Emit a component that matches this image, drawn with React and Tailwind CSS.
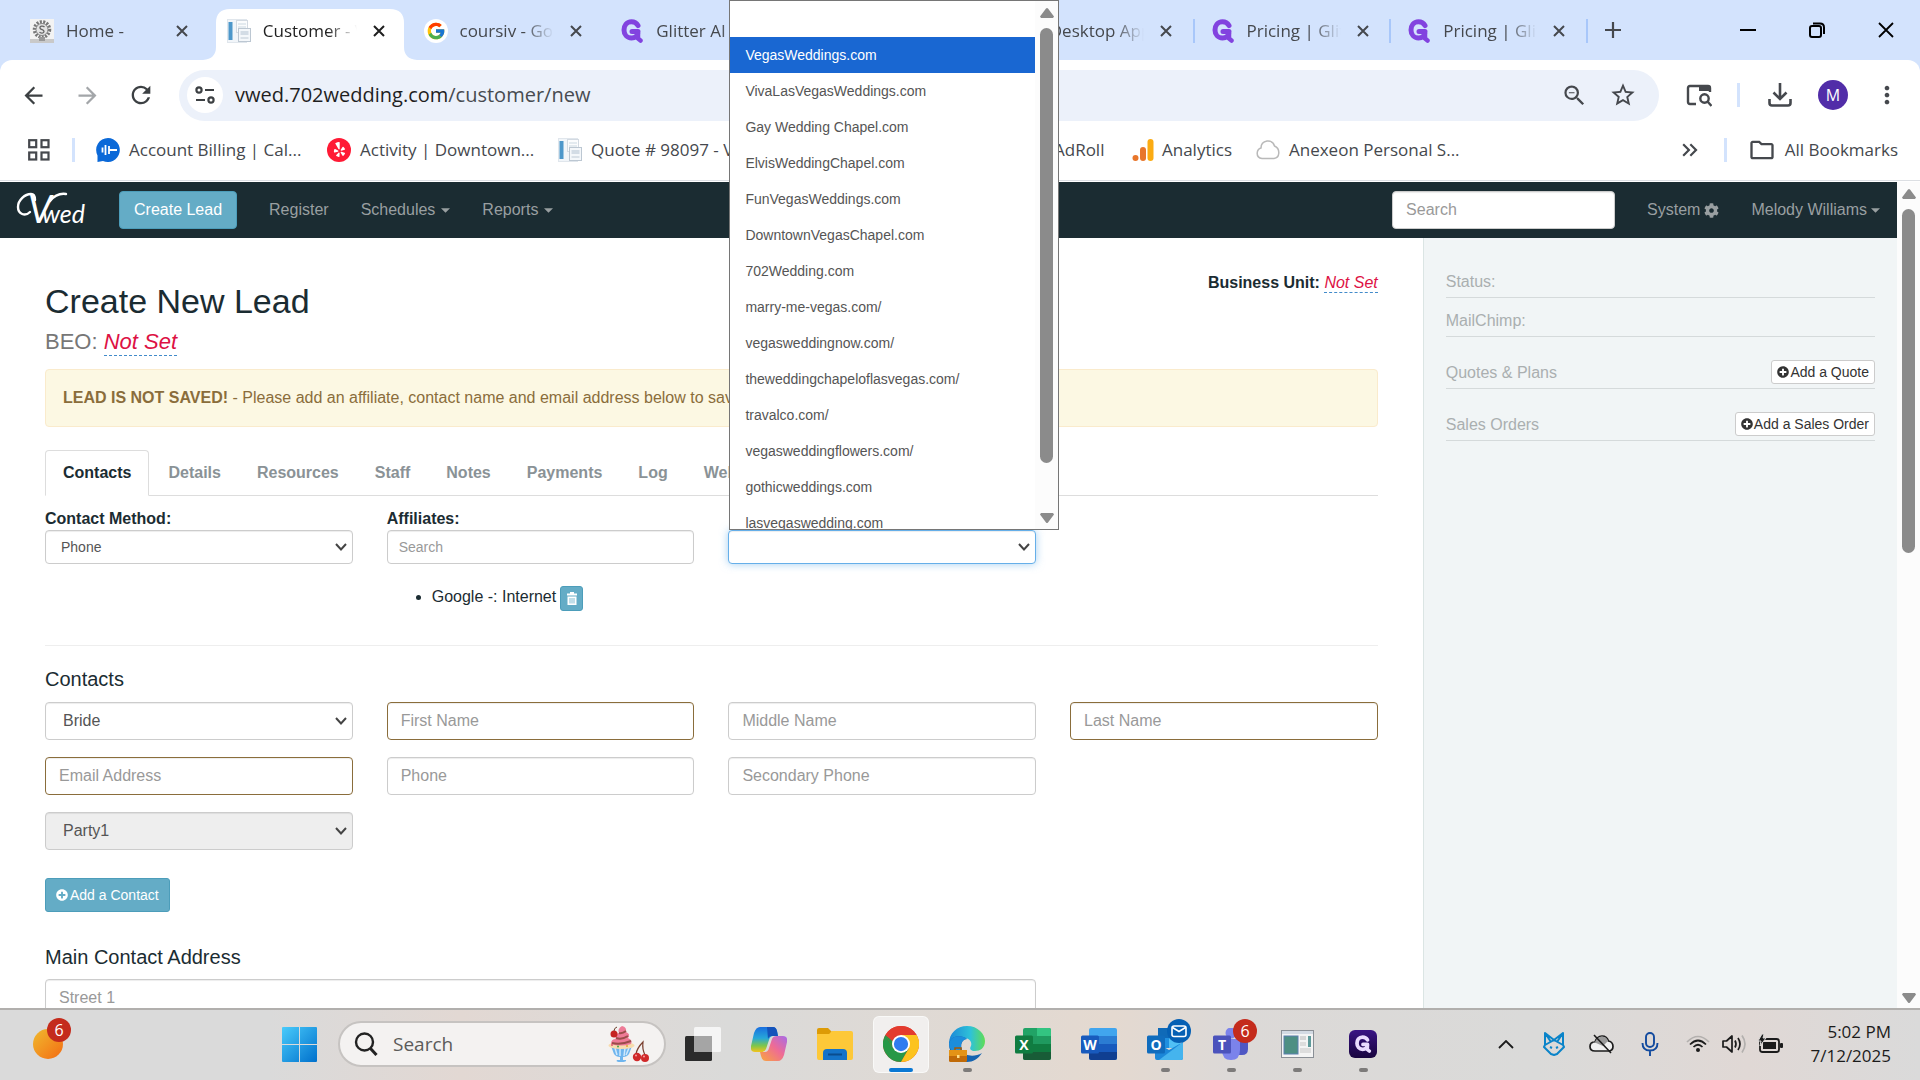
import React from "react";
import { FcGoogle } from "react-icons/fc";
import { FaCog, FaPlusCircle, FaYelp } from "react-icons/fa";
import { MdArrowBack, MdArrowForward, MdRefresh, MdZoomOut, MdStarOutline, MdMoreVert, MdKeyboardDoubleArrowRight, MdOutlineFolder } from "react-icons/md";

/* ---------- small drawings ---------- */

function GlitterMark({ className = "" }) {
  return (
    <svg viewBox="0 0 24 24" fill="none" stroke="currentColor" strokeWidth="5" className={className} aria-hidden="true">
      <path d="M18 6.500C16.500 4 14 2.800 11.500 2.800C6.500 2.800 4 7 4 11C4 15.500 7 19 11.500 19C15 19 18 16.800 18 12.500H12" strokeLinecap="round" strokeLinejoin="round" />
      <path d="M18 14V19.500L20.500 21.500" strokeWidth="4.500" strokeLinecap="round" />
    </svg>
  );
}

function DocIcon() {
  return (
    <svg viewBox="0 0 24 24" className="size-6 shrink-0" aria-hidden="true">
      <rect x="0.500" y="0.500" width="19" height="23" fill="#f1f5f9" stroke="#e0e6ec" />
      <rect x="1.500" y="3" width="4" height="18" fill="#4d97ca" />
      <rect x="9.500" y="1.500" width="11" height="12" fill="#fbfcfd" stroke="#d3dae2" />
      <path d="M11 5H19M11 8H19" stroke="#dce3ea" strokeWidth="1.500" />
      <rect x="11.500" y="9.500" width="12" height="13" fill="#f4f7fa" stroke="#bcc7d2" />
      <rect x="13.500" y="12" width="8" height="4" fill="#d3dce5" />
      <path d="M13.500 19H21.500" stroke="#d0d8e0" strokeWidth="1.500" />
    </svg>
  );
}

function SealIcon() {
  return (
    <svg viewBox="0 0 24 24" className="size-6 shrink-0" aria-hidden="true">
      <rect width="24" height="24" fill="#f3f3f3" />
      <rect y="20" width="24" height="4" fill="#c9c9c9" />
      <circle cx="12" cy="10.500" r="7.500" fill="none" stroke="#777" strokeWidth="3.500" strokeDasharray="2 1.300" />
      <circle cx="12" cy="10.500" r="6" fill="#e4e4e4" stroke="#888" />
      <path d="M14.500 8C13 6.500 9.500 7 10 9C10.500 11 14 10.500 14 12.500C14 14.500 10.500 14.500 9.500 13" fill="none" stroke="#666" strokeWidth="1.300" />
      <path d="M9 18H15V22H9Z" fill="#999" />
    </svg>
  );
}

function CloseX() {
  return (
    <svg viewBox="0 0 12 12" className="size-3" fill="none" stroke="currentColor" strokeWidth="2" aria-hidden="true">
      <path d="M1 1L11 11M11 1L1 11" />
    </svg>
  );
}

function Arrow({ down }) {
  return (
    <svg viewBox="0 0 14 12" className="h-3 w-3.5 shrink-0 fill-[#8b8b8b]" aria-hidden="true">
      {down ? <path d="M1 1H13L14 2.500L8 10.500Q7 11.500 6 10.500L0 2.500Z" /> : <path d="M1 11H13L14 9.500L8 1.500Q7 0.500 6 1.500L0 9.500Z" />}
    </svg>
  );
}

function Caret() {
  return (
    <svg viewBox="0 0 10 5" className="h-[5px] w-[9px] fill-current" aria-hidden="true"><path d="M0 0H10L5 5Z" /></svg>
  );
}

function TrashIcon() {
  return (
    <svg viewBox="0 0 12 13" className="h-[13px] w-3" aria-hidden="true">
      <path d="M4 1.500V0H8V1.500H11V3.500H1V1.500ZM1.500 4.500H10.500V13H1.500Z" fill="#fff" />
      <path d="M4 6V11.500M6 6V11.500M8 6V11.500" stroke="#64acc6" strokeWidth="0.800" />
    </svg>
  );
}

/* ---------- browser frame ---------- */

const TABS = [
  { title: "Home -", icon: "seal" },
  { title: "Customer - Vwed", icon: "doc", active: true },
  { title: "coursiv - Google", icon: "google" },
  { title: "Glitter AI", icon: "glitter" },
  { title: "Glitter AI", icon: "glitter" },
  { title: "Desktop App", icon: "glitter" },
  { title: "Pricing | Glitter", icon: "glitter" },
  { title: "Pricing | Glitter", icon: "glitter" },
];

function TabIcon({ kind }) {
  if (kind === "seal") return <SealIcon />;
  if (kind === "doc") return <DocIcon />;
  if (kind === "google")
    return <span className="flex size-6 shrink-0 items-center justify-center rounded-full bg-white"><FcGoogle className="size-5" /></span>;
  return <GlitterMark className="size-6 shrink-0 text-[#8243df]" />;
}

function Tab({ title, icon, active, separator }) {
  return (
    <div className={`relative flex h-full min-w-0 flex-1 items-center pt-px pl-4 ${active ? "z-10" : ""}`}>
      {active && (
        <svg viewBox="0 0 214 51" preserveAspectRatio="none" className="absolute -left-2 bottom-0 h-[51px] w-[214px] fill-white" aria-hidden="true">
          <path d="M0 51Q13 50 13 38V14Q13 0 27 0H187Q201 0 201 14V38Q201 50 214 51Z" />
        </svg>
      )}
      <div className="relative flex min-w-0 flex-1 items-center">
        <TabIcon kind={icon} />
        <span className={`ml-3 w-[94px] overflow-hidden whitespace-nowrap text-[17px] leading-6 [mask-image:linear-gradient(to_right,black_68%,transparent)] ${active ? "text-[#1f1f1f]" : "text-[#45484d]"}`}>{title}</span>
        <button aria-label="Close tab" className={`ml-3 p-1 ${active ? "text-[#1f1f1f]" : "text-[#45484d]"}`}><CloseX /></button>
      </div>
      {separator && <span className="h-6 w-0.5 bg-[#a8c7fa]" />}
    </div>
  );
}

function BrowserChrome() {
  return (
    <header className="shrink-0 bg-[#d3e3fd] font-['Open_Sans','Noto_Sans',sans-serif] text-[#45484d]">
      <div className="flex h-[60px] items-stretch">
        <div className="ml-3.5 flex w-[1574px] min-w-0">
          {TABS.map((t, i) => <Tab key={i} {...t} separator={i > 2} />)}
        </div>
        <button aria-label="New tab" className="ml-4 self-center">
          <svg viewBox="0 0 18 18" className="size-[18px]" stroke="currentColor" strokeWidth="2.200" aria-hidden="true"><path d="M9 1V17M1 9H17" /></svg>
        </button>
        <div className="ml-auto flex items-center gap-[53px] pr-[26px] text-black">
          <button aria-label="Minimize"><svg viewBox="0 0 16 16" className="size-4" stroke="currentColor" strokeWidth="2" aria-hidden="true"><path d="M0 8H16" /></svg></button>
          <button aria-label="Restore">
            <svg viewBox="0 0 16 16" className="size-4" fill="none" stroke="currentColor" strokeWidth="2" aria-hidden="true">
              <rect x="1" y="4" width="11" height="11" rx="2" /><path d="M4 1.500H11Q15 1.500 15 5.500V12" />
            </svg>
          </button>
          <button aria-label="Close"><svg viewBox="0 0 16 16" className="size-4" stroke="currentColor" strokeWidth="1.800" aria-hidden="true"><path d="M1 1L15 15M15 1L1 15" /></svg></button>
        </div>
      </div>

      <div className="rounded-t-xl border-b border-[#dcdfe3] bg-white">
        <div className="flex h-[70px] items-center pr-[19px] pl-5">
          <button aria-label="Back" className="text-[#3c4043]"><MdArrowBack className="size-[27px]" /></button>
          <button aria-label="Forward" className="ml-[27px] text-[#a3a6a9]"><MdArrowForward className="size-[27px]" /></button>
          <button aria-label="Reload" className="ml-[26px] text-[#3c4043]"><MdRefresh className="size-7" /></button>
          <div className="ml-6 flex h-[51px] flex-1 items-center rounded-full bg-[#ecf1fa] pr-[22px] pl-2">
            <button aria-label="Site information" className="flex size-9 items-center justify-center rounded-full bg-white text-[#3c4043]">
              <svg viewBox="0 0 20 18" className="h-[18px] w-5" fill="none" stroke="currentColor" strokeWidth="2.200" aria-hidden="true">
                <circle cx="4" cy="4" r="2.600" /><path d="M10 4H19M1 14H10" /><circle cx="16" cy="14" r="2.600" />
              </svg>
            </button>
            <div role="textbox" aria-label="Address" className="ml-3 flex-1 text-[20px] leading-7 text-[#1f1f1f]">vwed.702wedding.com<span className="text-[#474b50]">/customer/new</span></div>
            <button aria-label="Zoom"><MdZoomOut className="size-[27px]" /></button>
            <button aria-label="Bookmark" className="ml-[21px]"><MdStarOutline className="size-7" /></button>
          </div>
          <button aria-label="Search side panel" className="ml-[27px]">
            <svg viewBox="0 0 26 24" className="h-6 w-[26px]" fill="none" stroke="currentColor" strokeWidth="2.400" aria-hidden="true">
              <path d="M10 21H4Q2 21 2 19V5Q2 3 4 3H22Q24 3 24 5V9" /><path d="M13 3H24V8H13Z" fill="currentColor" stroke="none" />
              <circle cx="18.500" cy="15.500" r="4.200" /><path d="M21.500 18.500L25.500 23" />
            </svg>
          </button>
          <span className="ml-[25px] h-6 w-[3px] bg-[#d3e3fd]" />
          <button aria-label="Downloads" className="ml-7">
            <svg viewBox="0 0 24 24" className="size-6" fill="none" stroke="currentColor" strokeWidth="2.600" aria-hidden="true">
              <path d="M12 0V15M5.500 9.500L12 16L18.500 9.500M1.500 16V20Q1.500 22.500 4 22.500H20Q22.500 22.500 22.500 20V16" />
            </svg>
          </button>
          <button aria-label="Profile" className="ml-[26px] flex size-[30px] items-center justify-center rounded-full bg-[#512da8] text-base text-white">M</button>
          <button aria-label="Menu" className="ml-[25px]"><MdMoreVert className="size-[28px]" /></button>
        </div>

        <nav aria-label="Bookmarks" className="flex h-[50px] items-center pb-[11px] pl-7 pr-[22px] text-[17px] leading-6 whitespace-nowrap">
          <svg viewBox="0 0 22 22" className="size-[22px] shrink-0" fill="none" stroke="currentColor" strokeWidth="2.200" aria-hidden="true">
            <rect x="1.200" y="1.200" width="7" height="7" /><rect x="13.500" y="1.200" width="7" height="7" /><rect x="1.200" y="13.500" width="7" height="7" /><rect x="13.500" y="13.500" width="7" height="7" />
          </svg>
          <span className="ml-[22px] h-6 w-[3px] bg-[#d3e3fd]" />
          <a href="#billing" className="ml-[21px] flex items-center">
            <svg viewBox="0 0 24 24" className="size-6" aria-hidden="true">
              <path d="M12 0A12 12 0 1 1 7 23L1.500 24L1.500 17.500A12 12 0 0 1 12 0Z" fill="#0b69d8" />
              <path d="M6.500 9.500V14.500M9.500 7V17M13 8V16M13 12H21" stroke="#fff" strokeWidth="1.800" />
            </svg>
            <span className="ml-[9px] w-[176px]">Account Billing | Cal...</span>
          </a>
          <a href="#activity" className="ml-[22px] flex items-center">
            <span className="flex size-6 items-center justify-center rounded-full bg-[#ff1a35] text-white"><FaYelp className="size-[15px]" /></span>
            <span className="ml-[9px] w-[176px]">Activity | Downtown...</span>
          </a>
          <a href="#quote" className="ml-[22px] flex items-center"><DocIcon /><span className="ml-[9px] w-[176px]">Quote # 98097 - Vwed</span></a>
          <a href="#adroll" className="ml-[287px] w-[54px]">AdRoll</a>
          <a href="#analytics" className="ml-6 flex items-center">
            <svg viewBox="0 0 22 22" className="size-[22px]" aria-hidden="true">
              <rect x="15.500" width="6" height="22" rx="3" fill="#fbab12" /><rect x="8" y="8" width="6" height="14" rx="3" fill="#e8762b" /><circle cx="3.500" cy="19" r="3" fill="#e8762b" />
            </svg>
            <span className="ml-2 w-[74px]">Analytics</span>
          </a>
          <a href="#anexeon" className="ml-5 flex items-center">
            <svg viewBox="0 0 24 22" className="h-[22px] w-6" fill="#fff" stroke="#b9b9b9" strokeWidth="1.500" aria-hidden="true">
              <path d="M6 19.500Q1 19 1.200 14Q1.500 10 5 9Q5 3 11 2Q17 1.500 18.500 7Q23 9 22.800 14Q22.500 19 18 19.500Z" />
            </svg>
            <span className="ml-[9px]">Anexeon Personal S...</span>
          </a>
          <div className="ml-auto flex items-center">
            <button aria-label="More bookmarks"><MdKeyboardDoubleArrowRight className="size-[26px]" /></button>
            <span className="ml-[21px] h-6 w-[3px] bg-[#d3e3fd]" />
            <a href="#all" className="ml-[21px] flex items-center gap-[9px]"><MdOutlineFolder className="size-7" />All Bookmarks</a>
          </div>
        </nav>
      </div>
    </header>
  );
}

/* ---------- application ---------- */

function Navbar() {
  return (
    <nav className="flex h-14 items-center bg-[#1b2c32] pl-4 pr-[17px] text-[#999fa1]">
      <a href="#home" aria-label="Vwed" className="relative flex h-full w-[103px] items-center text-white">
        <svg viewBox="0 0 56 34" className="absolute top-[9px] left-0 h-[34px] w-14" fill="none" stroke="#fff" strokeWidth="2.400" strokeLinecap="round" aria-hidden="true">
          <path d="M14 21C9 26 2 23 2 16C2 9 9 3 15 3C18 3 19 5 19 9" />
          <path d="M34 10C38 5 43 2 50 3" />
        </svg>
        <span className="flex items-baseline pl-3 font-['Lato',sans-serif] text-[38px] leading-[38px] italic">
          V<span className="-ml-2.5 text-[25px]">wed</span>
        </span>
      </a>
      <button className="h-[38px] rounded-[4px] border border-[#4c9dba] bg-[#64acc6] px-3.5 text-white">Create Lead</button>
      <a href="#register" className="ml-8">Register</a>
      <button className="ml-8 flex items-center gap-1.5">Schedules <Caret /></button>
      <button className="ml-8 flex items-center gap-1.5">Reports <Caret /></button>
      <input aria-label="Search" placeholder="Search" className="ml-auto h-[38px] w-[223px] rounded-[4px] border border-[#ccc] bg-white px-[13px] shadow-[inset_0_1px_1px_rgba(0,0,0,0.08)] placeholder:text-[#999]" />
      <a href="#system" className="ml-8 flex items-center gap-1">System <FaCog className="size-[15px]" /></a>
      <button className="ml-8 flex items-center gap-1">Melody Williams <Caret /></button>
    </nav>
  );
}

function Select({ id, label, value, small, disabled, focused }) {
  return (
    <div className="relative">
      <select
        id={id}
        aria-label={label}
        defaultValue={value}
        disabled={disabled}
        className={`block w-full appearance-none rounded-[4px] border text-[#555] opacity-100 ${small ? "h-[34px] pl-[15px] text-sm" : "h-[38px] pl-[17px] text-base"} ${disabled ? "bg-[#eee]" : "bg-white"} ${focused ? "border-[#66afe9] shadow-[inset_0_1px_1px_rgba(0,0,0,0.075),0_0_9px_rgba(102,175,233,0.6)]" : "border-[#ccc] shadow-[inset_0_1px_1px_rgba(0,0,0,0.075)]"}`}
      >
        <option value={value}>{value}</option>
      </select>
      <svg viewBox="0 0 12 8" className="pointer-events-none absolute inset-y-0 right-1.5 my-auto h-2 w-3" fill="none" stroke="#444" strokeWidth="2" aria-hidden="true">
        <path d="M1 1L6 6.500L11 1" />
      </svg>
    </div>
  );
}

function Field({ label, small, required, className = "" }) {
  return (
    <input
      aria-label={label}
      placeholder={label}
      className={`block w-full rounded-[4px] border bg-white shadow-[inset_0_1px_1px_rgba(0,0,0,0.075)] placeholder:text-[#999] ${small ? "h-[34px] px-[11px] text-sm" : "h-[38px] px-[13px] text-base"} ${required ? "border-[#8a6d3b]" : "border-[#ccc]"} ${className}`}
    />
  );
}

const SITES = [
  "", "VegasWeddings.com", "VivaLasVegasWeddings.com", "Gay Wedding Chapel.com", "ElvisWeddingChapel.com",
  "FunVegasWeddings.com", "DowntownVegasChapel.com", "702Wedding.com", "marry-me-vegas.com/", "vegasweddingnow.com/",
  "theweddingchapeloflasvegas.com/", "travalco.com/", "vegasweddingflowers.com/", "gothicweddings.com", "lasvegaswedding.com",
];

function SiteList() {
  return (
    <div className="absolute bottom-full left-px z-30 flex h-[530px] w-[330px] overflow-hidden border border-[#767676] bg-white text-sm text-[#555]">
      <ul role="listbox" aria-label="Website" className="flex-1">
        {SITES.map((s) => (
          <li key={s} role="option" aria-selected={s === "VegasWeddings.com"} className={`h-9 pl-[15px] leading-9 ${s === "VegasWeddings.com" ? "bg-[#1967d2] text-white" : ""}`}>{s}</li>
        ))}
      </ul>
      <div className="flex w-[23px] flex-col items-center bg-[#fcfcfc] pt-1.5 pb-[5px]">
        <Arrow />
        <div className="mt-[9px] h-[435px] w-[13px] rounded-full bg-[#8b8b8b]" />
        <div className="mt-auto"><Arrow down /></div>
      </div>
    </div>
  );
}

const SECTIONS = ["Contacts", "Details", "Resources", "Staff", "Notes", "Payments", "Log", "Web"];

function NotSet() {
  return <a href="#set" className="border-b border-dashed border-[#428bca] pb-px text-[#dd1144] italic">Not Set</a>;
}

function LeadForm() {
  return (
    <main className="w-3/4 px-[45px] pt-[34px]">
      <div className="flex items-start justify-between">
        <div className="pt-2.5">
          <h1 className="text-[34px] leading-[38px]">Create New Lead</h1>
          <p className="mt-2.5 text-[22px] leading-6 text-[#777]">BEO: <NotSet /></p>
        </div>
        <p className="leading-[22px]"><b>Business Unit:</b> <NotSet /></p>
      </div>

      <div role="alert" className="mt-[15px] flex h-[58px] items-center rounded-[4px] border border-[#faebcc] bg-[#fcf8e3] px-[17px] whitespace-pre-wrap text-[#8a6d3b]">
        <b>LEAD IS NOT SAVED!</b> - Please add an affiliate, contact name and email address below to save.
      </div>

      <div role="tablist" className="mt-[23px] flex gap-0.5 border-b border-[#ddd]">
        {SECTIONS.map((s, i) => (
          <button key={s} role="tab" aria-selected={i === 0} className={`-mb-px h-[46px] rounded-t-[4px] border font-bold ${i === 0 ? "border-[#ddd] border-b-white bg-white px-[17px]" : "border-transparent px-4 text-[#8a9296]"}`}>{s}</button>
        ))}
      </div>

      <div className="mt-3 grid grid-cols-4 gap-x-[34px]">
        <div>
          <label htmlFor="method" className="block leading-[22px] font-bold">Contact Method:</label>
          <Select id="method" value="Phone" small />
        </div>
        <div>
          <span className="block leading-[22px] font-bold">Affiliates:</span>
          <Field label="Search" small />
          <ul className="mt-[22px] list-disc pl-[45px] leading-[22px]">
            <li>
              <div className="flex h-[25px] items-start gap-1">
                <span>Google -: Internet</span>
                <button aria-label="Remove affiliate" className="flex h-[25px] w-[23px] items-center justify-center rounded-[3px] border border-[#4c9dba] bg-[#64acc6]"><TrashIcon /></button>
              </div>
            </li>
          </ul>
        </div>
        <div className="pt-[22px]">
          <div className="relative">
            <Select label="Website" value="" small focused />
            <SiteList />
          </div>
        </div>
      </div>

      <hr className="mt-[34px] border-[#eee]" />

      <h2 className="mt-[22px] text-xl leading-[22px]">Contacts</h2>
      <div className="mt-3 grid grid-cols-4 gap-x-[34px] gap-y-[17px]">
        <Select label="Role" value="Bride" />
        <Field label="First Name" required />
        <Field label="Middle Name" />
        <Field label="Last Name" required />
        <Field label="Email Address" required />
        <Field label="Phone" />
        <Field label="Secondary Phone" />
        <div className="col-start-1"><Select label="Party" value="Party1" disabled /></div>
      </div>
      <button className="mt-7 flex h-[34px] items-center gap-0.5 rounded-[3px] border border-[#4c9dba] bg-[#64acc6] px-2.5 pb-px text-sm text-white">
        <FaPlusCircle className="size-3" />Add a Contact
      </button>

      <h2 className="mt-[34px] text-xl leading-[22px]">Main Contact Address</h2>
      <div className="mt-[11px] grid grid-cols-4 gap-x-[34px]"><Field label="Street 1" className="col-span-3" /></div>
    </main>
  );
}

function AddButton({ children }) {
  return (
    <button className="flex h-6 items-center gap-px rounded-[3px] border border-[#ccc] bg-white px-[5px] pb-px text-sm text-[#333]"><FaPlusCircle className="size-3" />{children}</button>
  );
}

function Sidebar() {
  const row = "flex border-b border-[#d5dadb]";
  return (
    <aside className="w-1/4 border-l border-[#dbe5e4] bg-[#f1f5f6] px-[22px] pt-[21px] text-[#aaafb0]">
      <div className={`${row} h-[39px] items-end pb-[3px]`}>Status:</div>
      <div className={`${row} h-[39px] items-end pb-[3px]`}>MailChimp:</div>
      <div className={`${row} mt-[23px] h-[29px] items-start justify-between`}><span className="leading-[26px]">Quotes &amp; Plans</span><AddButton>Add a Quote</AddButton></div>
      <div className={`${row} mt-[23px] h-[29px] items-start justify-between`}><span className="leading-[26px]">Sales Orders</span><AddButton>Add a Sales Order</AddButton></div>
    </aside>
  );
}

/* ---------- taskbar ---------- */

function OfficeIcon({ letter, tones, tile }) {
  return (
    <svg viewBox="0 0 36 32" className="h-8 w-9" aria-hidden="true">
      <rect x="8" width="28" height="32" rx="2" fill={tones[0]} />
      <path d="M8 8H36V16H8Z" fill={tones[1]} /><path d="M8 16H36V24H8Z" fill={tones[2]} /><path d="M8 24H36V30Q36 32 34 32H10Q8 32 8 30Z" fill={tones[3]} />
      {letter === "X" && <path d="M22 0H34Q36 0 36 2V8H22Z" fill="#33c481" />}
      <rect y="7.500" width="18" height="18" rx="1.500" fill={tile} />
      <text x="9" y="21.500" textAnchor="middle" fontFamily="Open Sans, sans-serif" fontWeight="700" fontSize="14" fill="#fff">{letter}</text>
    </svg>
  );
}

function ChromeIcon() {
  return (
    <svg viewBox="0 0 48 48" className="size-9" aria-hidden="true">
      <circle cx="24" cy="24" r="24" fill="#e33b2e" />
      <path d="M24 24L3.200 12A24 24 0 0 0 24 48L34.400 30Z" fill="#279847" />
      <path d="M24 24L34.400 30L24 48A24 24 0 0 0 44.800 12H24Z" fill="#fcc31e" />
      <path d="M3.200 12A24 24 0 0 1 44.800 12H24A12 12 0 0 0 13.600 18L13.600 30Z" fill="#e33b2e" />
      <path d="M3.200 12L13.600 30A12 12 0 0 0 24 36V30Z" fill="#279847" />
      <circle cx="24" cy="24" r="12" fill="#fff" /><circle cx="24" cy="24" r="9.500" fill="#2f7cf0" />
    </svg>
  );
}

function EdgeIcon() {
  return (
    <svg viewBox="0 0 36 36" className="size-9" aria-hidden="true">
      <defs><linearGradient id="edge" x1="0" x2="1"><stop offset="0" stopColor="#1b87d8" /><stop offset=".6" stopColor="#2fc2d8" /><stop offset="1" stopColor="#5fdd55" /></linearGradient></defs>
      <path d="M0 18C0 7 8 0 18 0C29 0 36 8 36 15C36 22 31 25 26 25C22 25 20.500 23 21.500 21C24 17 21 12 15 12C7 12 0 18 0 18Z" fill="url(#edge)" />
      <path d="M0 18C1 10 12 8 18 13C13 13 11 19 13 24C16 31 26 31 33 27C29 33 24 36 18 36C8 36 0 28 0 18Z" fill="#1463b0" />
      <path d="M0 18C1 10 12 8 18 13C12 14 11 19 13 24H2Q0 21 0 18Z" fill="#1c8ddc" />
      <path d="M6 24V22H12V24" fill="none" stroke="#a45a08" strokeWidth="1.500" />
      <rect y="24" width="18" height="12" rx="1.500" fill="#c06a08" /><rect y="24" width="18" height="6" fill="#e39316" /><rect x="8" y="29" width="2.500" height="3" fill="#ffe08a" />
    </svg>
  );
}

function TaskItem({ label, children, active, running }) {
  return (
    <button aria-label={label} className="relative flex h-[70px] w-[66px] items-center justify-center">
      <span className={`flex h-[57px] w-14 items-center justify-center rounded-md ${active ? "border border-white/60 bg-[#f1efee]" : ""}`}>{children}</span>
      {active && <span className="absolute bottom-[7px] h-1 w-6 rounded-full bg-[#0a78d4]" />}
      {running && <span className="absolute bottom-[7px] h-1 w-[9px] rounded-full bg-[#7d7b7a]" />}
    </button>
  );
}

function Taskbar() {
  return (
    <footer className="relative z-20 flex h-[72px] shrink-0 items-center border-t-2 border-[#b1afad] bg-[linear-gradient(90deg,#dadada_0%,#dadada_14%,#e2d8d3_24%,#dadad9_38%,#e4d9d0_58%,#dcd9d7_64%,#dadad9_80%,#e0d8d5_91%,#dadada_100%)] pr-[29px] pb-[2px] pl-[33px] font-['Open_Sans','Noto_Sans',sans-serif] text-[#1b1b1b]">
      <button aria-label="Widgets, 6 notifications" className="relative size-[30px] rounded-full bg-gradient-to-br from-[#eeb92e] to-[#f26a12]">
        <span className="absolute -top-[11px] left-3.5 flex size-6 items-center justify-center rounded-full bg-[#c42b1c] text-base leading-6 text-white">6</span>
      </button>
      <button aria-label="Start" className="ml-[219px]">
        <svg viewBox="0 0 35 35" className="size-[35px]" aria-hidden="true">
          <defs><linearGradient id="win" x1="0" y1="0" x2="1" y2="1"><stop offset="0" stopColor="#49cbfb" /><stop offset="1" stopColor="#0070cc" /></linearGradient></defs>
          <path d="M1 0H17V17H0V1Q0 0 1 0ZM18 0H34Q35 0 35 1V17H18ZM0 18H17V35H1Q0 35 0 34ZM18 18H35V34Q35 35 34 35H18Z" fill="url(#win)" />
        </svg>
      </button>
      <div className="ml-[21px] flex h-[46px] w-[328px] items-center rounded-full border-2 border-[#c6c3c1] bg-[#f4f2f1] pr-[15px] pl-3.5">
        <svg viewBox="0 0 24 24" className="size-6 shrink-0" fill="none" stroke="#222" strokeWidth="2.400" aria-hidden="true"><circle cx="10.500" cy="10" r="8.500" /><path d="M16.500 16.500L22.500 23" strokeWidth="3" /></svg>
        <input aria-label="Search the computer" placeholder="Search" className="ml-[15px] w-0 flex-1 bg-transparent text-[19px] placeholder:text-[#5c5b5a]" />
        <svg viewBox="0 0 42 36" className="h-9 w-[42px]" aria-hidden="true">
          <path d="M4 20H25L22 28Q20 31 16 31V34H19Q20 36 14 36Q8 36 10 34H13V31Q9 31 7 28Z" fill="#6fb5ee" />
          <path d="M8 22L10 29M13 22V30M18 22L17 30M22 22L19 29" stroke="#cfe8fb" strokeWidth="1.500" />
          <ellipse cx="14.500" cy="19.500" rx="13" ry="3.500" fill="#f7dcae" />
          <path d="M4 18Q4 13 9 13Q7 8 12 7Q10 3 15 0Q20 1 19 6Q24 8 21 12Q26 14 24 18Q14 21 4 18Z" fill="#ee7b97" />
          <path d="M5 17Q14 19 24 15M9 12Q15 14 21 10M12 7Q15 8 19 5" stroke="#9a4d4a" strokeWidth="2" fill="none" />
          <circle cx="7" cy="8" r="3.500" fill="#c52523" /><path d="M7 5Q7 2 10 1" stroke="#6b3f2a" fill="none" />
          <path d="M29 28Q30 22 36 16Q35 23 38 29" stroke="#7a4030" fill="none" strokeWidth="1.200" />
          <circle cx="30" cy="31" r="4.200" fill="#d0292a" /><circle cx="38" cy="32" r="4" fill="#d0292a" /><circle cx="29" cy="29.500" r="1" fill="#f6a0a0" /><circle cx="37" cy="30.500" r="1" fill="#f6a0a0" />
          <circle cx="5" cy="19" r="1" fill="#e05b72" /><circle cx="11" cy="20.500" r="1" fill="#4aa34a" /><circle cx="20" cy="20" r="1" fill="#e0a62f" />
        </svg>
      </div>
      <div className="ml-1 flex">
        <TaskItem label="Task view">
          <svg viewBox="0 0 36 34" className="h-[34px] w-9" aria-hidden="true"><rect y="9" width="27" height="25" rx="1.500" fill="#2b2b2b" /><rect x="9" width="27" height="25" rx="1.500" fill="#f5f5f5" /><path d="M9 9H27V25H9Z" fill="#a5a5a5" /></svg>
        </TaskItem>
        <TaskItem label="Copilot">
          <svg viewBox="0 0 36 34" className="h-[34px] w-9" aria-hidden="true">
            <defs>
              <linearGradient id="cpa" x1="0" y1="0" x2="0" y2="1"><stop offset="0" stopColor="#1a6fe0" /><stop offset=".45" stopColor="#27a8d8" /><stop offset=".75" stopColor="#7fc64a" /><stop offset="1" stopColor="#f3c31c" /></linearGradient>
              <linearGradient id="cpb" x1="1" y1="0" x2="0" y2="1"><stop offset="0" stopColor="#a66be8" /><stop offset=".45" stopColor="#ee6b96" /><stop offset="1" stopColor="#f9a63c" /></linearGradient>
            </defs>
            <path d="M9 0H22Q25 0 26 4L27 9H22Q19 9 18 13L15 22Q14 25 10 25H4Q-1 25 0 19L3 6Q5 0 9 0Z" fill="url(#cpa)" />
            <path d="M27 34H15Q11 34 10 29L9 25H14Q17 25 18 21L21 12Q22 9 26 9H32Q37 9 36 15L33 28Q31 34 27 34Z" fill="url(#cpb)" />
            <path d="M16 0H22Q25 0 26 4L27 9H21Q18 9 17 12Z" fill="#1553ba" />
          </svg>
        </TaskItem>
        <TaskItem label="File Explorer">
          <svg viewBox="0 0 36 32" className="h-8 w-9" aria-hidden="true"><path d="M0 2Q0 0 2 0H11L15 4V10H0Z" fill="#dd9b06" /><path d="M0 6H12L15 3H34Q36 3 36 5V30Q36 32 34 32H2Q0 32 0 30Z" fill="#fdc838" /><path d="M6 32V25Q6 21 10 21H26Q30 21 30 25V32Z" fill="#1473c8" /><path d="M11 26.500H25" stroke="#0a4d8e" strokeWidth="2" /></svg>
        </TaskItem>
        <TaskItem label="Chrome" active><ChromeIcon /></TaskItem>
        <TaskItem label="Edge" running><EdgeIcon /></TaskItem>
        <TaskItem label="Excel"><OfficeIcon letter="X" tones={["#21a366", "#1f9a5f", "#107c41", "#185c37"]} tile="#107c41" /></TaskItem>
        <TaskItem label="Word"><OfficeIcon letter="W" tones={["#41a5ee", "#2b7cd3", "#185abd", "#103f91"]} tile="#185abd" /></TaskItem>
        <TaskItem label="Outlook" running>
          <span className="relative">
            <svg viewBox="0 0 36 32" className="h-8 w-9" aria-hidden="true">
              <path d="M11 0H33V20H11Z" fill="#1f8fe0" /><path d="M11 0H22V10H11Z" fill="#0f6ab8" /><path d="M22 10H33V20H22Z" fill="#50c0f5" /><path d="M8 14L22 22L36 14V30Q36 32 34 32H10Q8 32 8 30Z" fill="#1b87d8" /><path d="M36 14L12 32H34Q36 32 36 30Z" fill="#45b4ee" />
              <rect y="7.500" width="18" height="18" rx="1.500" fill="#0f6cbd" /><text x="9" y="21.500" textAnchor="middle" fontFamily="Open Sans, sans-serif" fontWeight="700" fontSize="14" fill="#fff">O</text>
            </svg>
            <svg viewBox="0 0 24 24" className="absolute -top-[9px] left-5 size-6" aria-hidden="true"><circle cx="12" cy="12" r="12" fill="#0560b4" /><rect x="5" y="7" width="14" height="10.500" rx="2" fill="none" stroke="#fff" strokeWidth="1.600" /><path d="M5.500 8.500L12 12.500L18.500 8.500" fill="none" stroke="#fff" strokeWidth="1.600" /></svg>
          </span>
        </TaskItem>
        <TaskItem label="Teams" running>
          <span className="relative">
            <svg viewBox="0 0 36 32" className="h-8 w-9" aria-hidden="true">
              <circle cx="30" cy="6" r="4" fill="#4f57c4" /><path d="M24 12H35V21Q35 27 29 27H24Z" fill="#4f57c4" /><circle cx="18" cy="5" r="5.500" fill="#7b83eb" /><path d="M9 11H27V22Q27 32 18 32Q9 32 9 22Z" fill="#7b83eb" />
              <rect y="7.500" width="18" height="18" rx="1.500" fill="#4b53bc" /><text x="9" y="21.500" textAnchor="middle" fontFamily="Open Sans, sans-serif" fontWeight="700" fontSize="14" fill="#fff">T</text>
            </svg>
            <span className="absolute -top-[9px] left-5 flex size-6 items-center justify-center rounded-full bg-[#c42b1c] text-base leading-6 text-white">6</span>
          </span>
        </TaskItem>
        <TaskItem label="Window" running>
          <svg viewBox="0 0 33 28" className="h-7 w-[33px]" aria-hidden="true"><rect x=".5" y=".5" width="32" height="27" fill="#f4f4f4" stroke="#8a8f96" /><path d="M1 1H32V4H1Z" fill="#d3dae3" /><rect x="3" y="6" width="14" height="18" fill="#4d8f83" stroke="#5a7fae" /><rect x="19" y="6" width="6" height="4" fill="#d5d5d5" /><rect x="19" y="12" width="6" height="4" fill="#ddd" /><rect x="19" y="18" width="11" height="5" fill="#ddd" /><rect x="27" y="6" width="3" height="11" fill="#5e9a9a" /></svg>
        </TaskItem>
        <TaskItem label="Glitter" running>
          <span className="flex size-7 items-center justify-center rounded-md bg-gradient-to-b from-[#3a1585] to-[#19053f]"><GlitterMark className="size-[18px] text-[#eadcff]" /></span>
        </TaskItem>
      </div>

      <div className="ml-auto flex items-center">
        <svg viewBox="0 0 16 9" className="h-[9px] w-4" fill="none" stroke="currentColor" strokeWidth="1.800" aria-hidden="true"><path d="M1 8L8 1L15 8" /></svg>
        <svg viewBox="0 0 22 24" className="ml-[29px] h-6 w-[22px]" fill="none" stroke="#0a84c9" strokeWidth="2" strokeLinejoin="round" aria-hidden="true"><path d="M2 1L11 8L20 1V13L21 15L14 22L11 23L8 22L1 15L2 13ZM2 13L11 8L20 13M2 1L8 10M20 1L14 10M7 15L9 16M15 15L13 16" /></svg>
        <svg viewBox="0 0 25 20" className="ml-6 h-5 w-[25px]" aria-hidden="true"><path d="M6 17Q1 17 1 12.500Q1 8 6 8Q8 2 13 2Q18 2 19.500 7Q24 8 24 12.500Q24 17 19 17Z" fill="#f0f0f0" stroke="#1b1b1b" strokeWidth="1.700" /><path d="M2 12Q3 8 7 9L14 12L19 7Q18 3 13 2.500Q8 3 6 8Q1.500 9 2 12Z" fill="#9a9a9a" /><path d="M5 1L22 19" stroke="#1b1b1b" strokeWidth="1.600" /></svg>
        <svg viewBox="0 0 18 24" className="ml-[27px] h-6 w-[18px]" fill="none" stroke="#124a9e" strokeWidth="1.900" aria-hidden="true"><rect x="5" y="1" width="8" height="14" rx="4" /><path d="M1.500 11Q1.500 18.500 9 18.500Q16.500 18.500 16.500 11M9 18.500V24" /></svg>
        <svg viewBox="0 0 24 18" className="ml-[27px] h-[18px] w-6" fill="none" stroke="currentColor" strokeWidth="1.700" aria-hidden="true"><path d="M1 7Q12 -4 23 7" stroke="#b3b0ae" /><path d="M4 9.500Q12 1.500 20 9.500M7.500 12Q12 7.500 16.500 12" /><circle cx="12" cy="15" r="2" fill="currentColor" stroke="none" /></svg>
        <svg viewBox="0 0 25 20" className="ml-3 h-5 w-[25px]" fill="none" stroke="currentColor" strokeWidth="1.700" aria-hidden="true"><path d="M1 7H4.500L10 2V18L4.500 13H1Z" strokeLinejoin="round" /><path d="M13 6.500Q15 10 13 13.500M16 4Q20 10 16 16" /><path d="M20 1.500Q26 10 20 18.500" stroke="#b3b0ae" /></svg>
        <svg viewBox="0 0 25 20" className="ml-[11px] h-5 w-[25px]" aria-hidden="true"><rect x="2" y="5" width="19" height="13" rx="2.500" fill="none" stroke="#1b1b1b" strokeWidth="1.800" /><rect x="5" y="8" width="13" height="7" fill="#1b1b1b" /><rect x="22" y="9" width="3" height="5" rx="1" fill="#1b1b1b" /><path d="M4 0L0 7H3L2 12L8 4H5L6 0Z" fill="#1b1b1b" stroke="#dbd9d8" strokeWidth="1" /></svg>
        <div className="w-[108px] text-right text-[17px] leading-6"><div>5:02 PM</div><div>7/12/2025</div></div>
      </div>
    </footer>
  );
}

export default function App() {
  return (
    <div className="flex h-screen flex-col overflow-hidden bg-white font-['Liberation_Sans',Arial,sans-serif] text-base text-[#1b2c32]">
      <BrowserChrome />
      <div className="mt-px flex min-h-0 flex-1">
        <div className="flex min-w-0 flex-1 flex-col">
          <Navbar />
          <div className="flex min-h-0 flex-1"><LeadForm /><Sidebar /></div>
        </div>
        <div className="flex w-[23px] flex-col items-center bg-[#fcfcfc] pt-1.5 pb-1">
          <Arrow />
          <div className="mt-[9px] h-[344px] w-[13px] rounded-full bg-[#8b8b8b]" />
          <div className="mt-auto"><Arrow down /></div>
        </div>
      </div>
      <Taskbar />
    </div>
  );
}
